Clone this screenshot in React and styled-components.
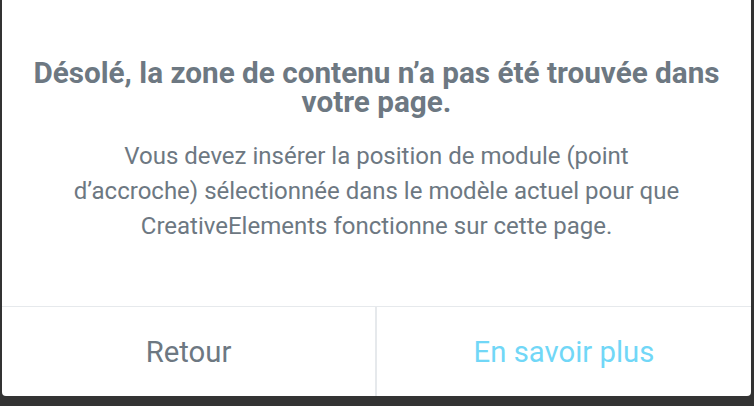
import React from 'react'
import styled, { createGlobalStyle } from 'styled-components'

const GlobalStyle = createGlobalStyle`
  html, body {
    margin: 0;
    padding: 0;
    background: #333333;
    font-family: Roboto, "Liberation Sans", Arial, sans-serif;
  }
`

export default function App() {
  return (
    <>
      <GlobalStyle />
      <Backdrop>
        <Dialog>
          <Message>
            <Title>Désolé, la zone de contenu n’a pas été trouvée dans votre page.</Title>
            <Text>
              Vous devez insérer la position de module (point d’accroche) sélectionnée dans le modèle actuel pour que CreativeElements fonctionne sur cette page.
            </Text>
          </Message>
          <Buttons>
            <Button>Retour</Button>
            <Button primary>En savoir plus</Button>
          </Buttons>
        </Dialog>
      </Backdrop>
    </>
  )
}

const Backdrop = styled.div`
  height: 406px;
  box-sizing: border-box;
  padding: 0 3px 10px 2px;
  display: flex;
  flex-direction: column;
`

const Dialog = styled.div`
  flex: 1;
  background: #ffffff;
  border-radius: 0 0 4px 4px;
  display: flex;
  flex-direction: column;
  overflow: hidden;
`

const Message = styled.div`
  height: 307px;
  box-sizing: border-box;
  padding: 58px 28px 0;
  text-align: center;
  color: #6d7882;
  border-bottom: 1px solid #e6e9ec;
`

const Title = styled.h2`
  margin: 0;
  font-size: 29.7px;
  font-weight: 700;
  line-height: 29px;
`

const Text = styled.p`
  margin: 23px auto 0;
  max-width: 620px;
  font-size: 24px;
  line-height: 35px;
`

const Buttons = styled.div`
  flex: 1;
  display: grid;
  grid-template-columns: 373px 1fr;
`

const Button = styled.button`
  border: none;
  background: none;
  font-family: inherit;
  font-size: 29.3px;
  color: ${p => (p.primary ? '#71d7f7' : '#6d7882')};
  border-left: ${p => (p.primary ? '2px solid #e6e9ec' : 'none')};
  padding: 0;
  cursor: pointer;
`
